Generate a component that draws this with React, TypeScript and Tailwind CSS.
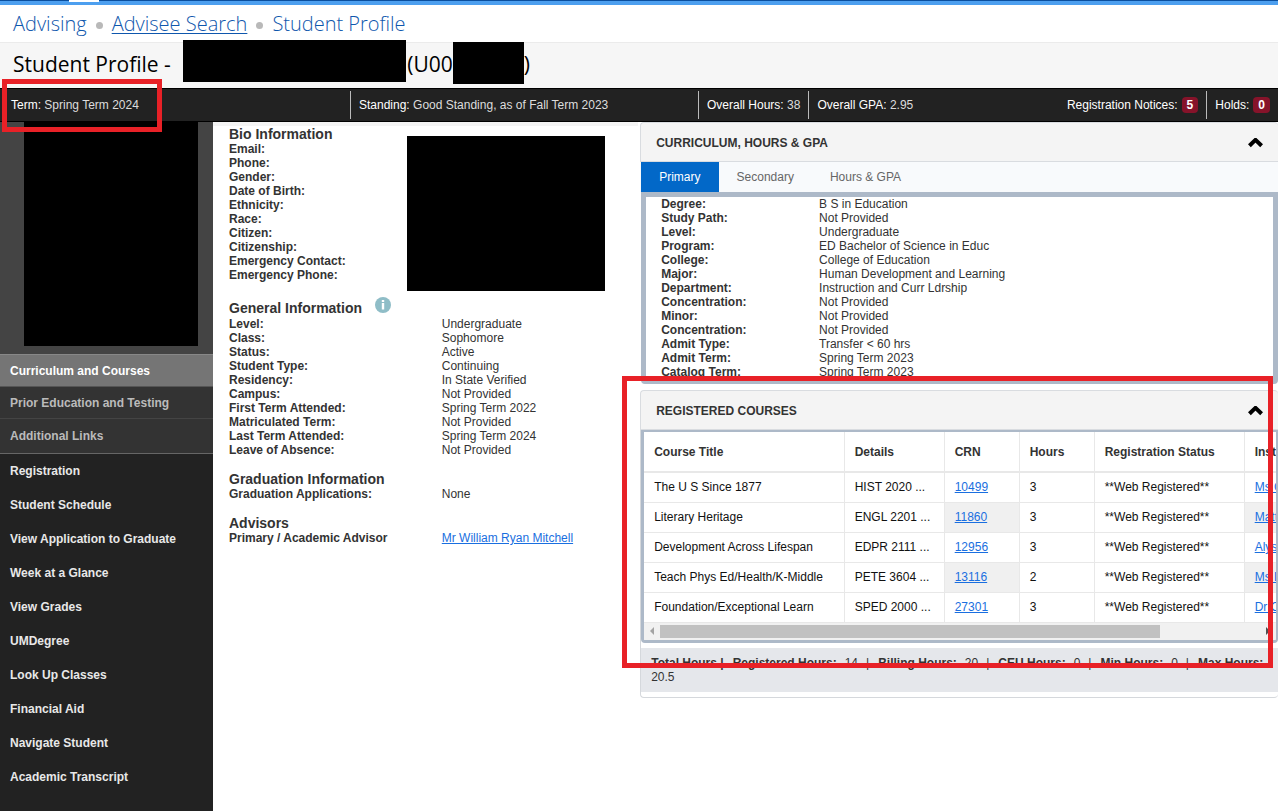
import type { ReactNode } from 'react'

type Field = [label: string, value: string]

const bioFields = [
  'Email:',
  'Phone:',
  'Gender:',
  'Date of Birth:',
  'Ethnicity:',
  'Race:',
  'Citizen:',
  'Citizenship:',
  'Emergency Contact:',
  'Emergency Phone:',
]

const generalFields: Field[] = [
  ['Level:', 'Undergraduate'],
  ['Class:', 'Sophomore'],
  ['Status:', 'Active'],
  ['Student Type:', 'Continuing'],
  ['Residency:', 'In State Verified'],
  ['Campus:', 'Not Provided'],
  ['First Term Attended:', 'Spring Term 2022'],
  ['Matriculated Term:', 'Not Provided'],
  ['Last Term Attended:', 'Spring Term 2024'],
  ['Leave of Absence:', 'Not Provided'],
]

const curriculumFields: Field[] = [
  ['Degree:', 'B S in Education'],
  ['Study Path:', 'Not Provided'],
  ['Level:', 'Undergraduate'],
  ['Program:', 'ED Bachelor of Science in Educ'],
  ['College:', 'College of Education'],
  ['Major:', 'Human Development and Learning'],
  ['Department:', 'Instruction and Curr Ldrship'],
  ['Concentration:', 'Not Provided'],
  ['Minor:', 'Not Provided'],
  ['Concentration:', 'Not Provided'],
  ['Admit Type:', 'Transfer < 60 hrs'],
  ['Admit Term:', 'Spring Term 2023'],
  ['Catalog Term:', 'Spring Term 2023'],
]

const courses = [
  { title: 'The U S Since 1877', details: 'HIST 2020 ...', crn: '10499', hours: 3, instructor: 'Ms C' },
  { title: 'Literary Heritage', details: 'ENGL 2201 ...', crn: '11860', hours: 3, instructor: 'Matt' },
  { title: 'Development Across Lifespan', details: 'EDPR 2111 ...', crn: '12956', hours: 3, instructor: 'Alys' },
  { title: 'Teach Phys Ed/Health/K-Middle', details: 'PETE 3604 ...', crn: '13116', hours: 2, instructor: 'Ms L' },
  { title: 'Foundation/Exceptional Learn', details: 'SPED 2000 ...', crn: '27301', hours: 3, instructor: 'Dr C' },
]

const totals: Field[] = [
  ['Registered Hours:', '14'],
  ['Billing Hours:', '20'],
  ['CEU Hours:', '0'],
  ['Min Hours:', '0'],
]

const links = [
  'Registration',
  'Student Schedule',
  'View Application to Graduate',
  'Week at a Glance',
  'View Grades',
  'UMDegree',
  'Look Up Classes',
  'Financial Aid',
  'Navigate Student',
  'Academic Transcript',
]

function Fields({ items, columns }: { items: Field[]; columns: string }) {
  return (
    <dl>
      {items.map(([label, value], i) => (
        <div key={i} className={`grid ${columns}`}>
          <dt className="font-bold">{label}</dt>
          <dd>{value}</dd>
        </div>
      ))}
    </dl>
  )
}

function PanelHeader({ children }: { children: ReactNode }) {
  return (
    <div className="flex h-10 items-center justify-between rounded-t border border-r-0 border-[#d9dce0] bg-[#f4f4f4] px-[15px] pt-px">
      <h2 className="font-bold">{children}</h2>
      <button aria-label={`Collapse ${children}`}>
        <svg width="15" height="10" viewBox="0 0 15 10" aria-hidden="true">
          <path d="M1.4 7.8 7.5 1.9l6.1 5.9" fill="none" stroke="#000" strokeWidth="4" />
        </svg>
      </button>
    </div>
  )
}

function SubHeading({ children }: { children: ReactNode }) {
  return <h2 className="text-[14px] leading-4 font-bold">{children}</h2>
}

function Stat({ label, value }: { label: string; value: string }) {
  return (
    <span>
      <span className="text-white">{label}</span> {value}
    </span>
  )
}

function Count({ label, value }: { label: string; value: number }) {
  return (
    <span className="flex items-center gap-1 text-white">
      {label}
      <span className="rounded-sm bg-[#86132a] px-[5px] font-bold leading-4">{value}</span>
    </span>
  )
}

export default function App() {
  return (
    <div className="flex min-h-screen flex-col overflow-hidden bg-white font-['Liberation_Sans',Arial,sans-serif] text-[12px] leading-[14px] text-[#333]">
      <div className="h-[5px] border-t border-[#0b4f9e] bg-[#4d9fef]">
        <div className="-mt-px ml-[69px] h-0.5 w-[30px] bg-white" />
      </div>

      <nav className="flex h-[37px] items-center gap-[9px] px-[13px] font-['Open_Sans',sans-serif] text-[20px] font-light text-[#0f57ad]" aria-label="Breadcrumb">
        <a href="#advising">Advising</a>
        <span className="mt-1 size-[7px] rounded-full bg-[#b9b9b9]" />
        <a href="#search" className="underline decoration-1 underline-offset-2">Advisee Search</a>
        <span className="mt-1 size-[7px] rounded-full bg-[#b9b9b9]" />
        <a href="#profile">Student Profile</a>
      </nav>

      <header className="flex h-[46px] items-start border-t border-[#ebebeb] bg-[#f6f6f6] px-[13px] font-['Open_Sans',sans-serif] text-[21px] leading-[42px] text-black">
        <h1 className="flex whitespace-pre">
          Student Profile -{' '}
          <span className="-mt-[3px] ml-[7px] h-[42px] w-[223px] bg-black" />
          <span className="ml-px">(U00</span>
          <span className="-mt-px h-[42px] w-[71px] bg-black" />)
        </h1>
      </header>

      <div className="flex h-[34px] items-stretch border-y border-black bg-[#222] py-0.5 text-[#ddd]">
        <div className="flex w-[351px] items-center border-r border-[#bbb] pl-[11px]">
          <Stat label="Term:" value="Spring Term 2024" />
        </div>
        <div className="flex w-[348px] items-center border-r border-[#bbb] pl-2">
          <Stat label="Standing:" value="Good Standing, as of Fall Term 2023" />
        </div>
        <div className="flex items-center border-r border-[#bbb] px-2">
          <Stat label="Overall Hours:" value="38" />
        </div>
        <div className="flex items-center px-2">
          <Stat label="Overall GPA:" value="2.95" />
        </div>
        <div className="ml-auto flex items-center border-r border-[#bbb] px-2">
          <Count label="Registration Notices:" value={5} />
        </div>
        <div className="flex items-center px-2">
          <Count label="Holds:" value={0} />
        </div>
      </div>

      <div className="flex grow">
        <aside className="w-[213px] shrink-0 bg-[#222] font-bold text-[#e8e8e8]">
          <div className="bg-[#444] pr-[15px] pb-2 pl-6">
            <div className="h-56 bg-black" />
          </div>
          <nav aria-label="Student">
            <div className="border-b border-[#666] bg-[#333] text-[#bbb]">
              <a href="#curriculum" className="flex h-[33px] items-center border-t border-b border-t-[#888] border-b-[#555] bg-[#757575] px-2.5 text-white">Curriculum and Courses</a>
              <a href="#prior" className="flex h-8 items-center border-b border-[#444] px-2.5">Prior Education and Testing</a>
              <a href="#additional" className="flex h-[34px] items-center px-2.5">Additional Links</a>
            </div>
            {links.map((link) => (
              <a key={link} href="#link" className="flex h-[34px] items-center px-2.5">{link}</a>
            ))}
          </nav>
        </aside>

        <main className="grid min-w-0 grow grid-cols-[2fr_3fr] gap-0.5">
          <div className="border-t-4 border-[#f4f4f4] pl-4">
            <section className="flex justify-between pr-[33px]">
              <div>
                <SubHeading>Bio Information</SubHeading>
                <dl>
                  {bioFields.map((label) => (
                    <dt key={label} className="font-bold">{label}</dt>
                  ))}
                </dl>
              </div>
              <div className="mt-[10px] h-[155px] w-[198px] bg-black" />
            </section>

            <section className="mt-1">
              <div className="flex h-[22px] items-start gap-[13px]">
                <div className="pt-[5px]">
                  <SubHeading>General Information</SubHeading>
                </div>
                <svg className="mt-0.5" width="16" height="16" viewBox="0 0 16 16" role="img" aria-label="About general information">
                  <circle cx="8" cy="8" r="8" fill="#8fbdc7" />
                  <path d="M6.8 3h2.4v2H6.8zM6.8 6h2.4v6.6H6.8z" fill="#fff" />
                </svg>
              </div>
              <Fields items={generalFields} columns="grid-cols-[13fr_12fr]" />
            </section>

            <section className="mt-[14px]">
              <SubHeading>Graduation Information</SubHeading>
              <Fields items={[['Graduation Applications:', 'None']]} columns="grid-cols-[13fr_12fr]" />
            </section>

            <section className="mt-[14px]">
              <SubHeading>Advisors</SubHeading>
              <div className="grid grid-cols-[13fr_12fr]">
                <span className="font-bold">Primary / Academic Advisor</span>
                <a href="#advisor" className="text-[#1a6fe0] underline">Mr William Ryan Mitchell</a>
              </div>
            </section>
          </div>

          <div className="flex min-w-0 flex-col gap-1.5">
            <section>
              <PanelHeader>CURRICULUM, HOURS &amp; GPA</PanelHeader>
              <div className="flex h-[30px] bg-[#f8fafc] pl-px text-[#666]" role="tablist">
                <button role="tab" aria-selected="true" className="bg-[#0268c8] px-[18px] text-white">Primary</button>
                <button role="tab" aria-selected="false" className="px-[18px]">Secondary</button>
                <button role="tab" aria-selected="false" className="px-[18px]">Hours &amp; GPA</button>
              </div>
              <div className="ml-px overflow-hidden rounded-b border-5 border-[#adb9c8] pl-[15px]">
                <Fields items={curriculumFields} columns="grid-cols-[8fr_23fr]" />
              </div>
            </section>

            <section className="relative">
              {/* highlight around the registered courses */}
              <div className="pointer-events-none absolute -top-[14px] right-[5px] -left-[18px] h-[292px] border-5 border-[#e82127]" />
              <PanelHeader>REGISTERED COURSES</PanelHeader>
              <div className="rounded-b border-b border-l border-[#d5d8dc] pb-[5px]">
                <div className="overflow-hidden rounded-b border-3 border-r-2 border-t-2 border-[#adb9c8]">
                  <table className="w-[700px] table-fixed border-collapse text-left">
                    <colgroup>
                      <col className="w-[200px]" />
                      <col className="w-[100px]" />
                      <col className="w-[75px]" />
                      <col className="w-[75px]" />
                      <col className="w-[150px]" />
                      <col />
                    </colgroup>
                    <thead>
                      <tr className="h-10 border-b-2 border-[#e8e8e8]">
                        {['Course Title', 'Details', 'CRN', 'Hours', 'Registration Status', 'Instructor'].map((name) => (
                          <th key={name} className="border-r border-[#e8e8e8] px-2.5 font-bold">{name}</th>
                        ))}
                      </tr>
                    </thead>
                    <tbody className="text-[#111]">
                      {courses.map((course) => (
                        <tr key={course.crn} className="group h-[30px] border-b border-[#e8e8e8]">
                          <td className="border-r border-[#e8e8e8] px-2.5">{course.title}</td>
                          <td className="border-r border-[#e8e8e8] px-2.5 whitespace-nowrap">{course.details}</td>
                          <td className="border-r border-[#e8e8e8] px-2.5 group-even:bg-[#f0f0f0]">
                            <a href="#crn" className="text-[#1a6fe0] underline">{course.crn}</a>
                          </td>
                          <td className="border-r border-[#e8e8e8] px-2.5">{course.hours}</td>
                          <td className="border-r border-[#e8e8e8] px-2.5">**Web Registered**</td>
                          <td className="px-2.5 group-even:bg-[#f0f0f0]">
                            <a href="#instructor" className="text-[#1a6fe0] underline">{course.instructor}</a>
                          </td>
                        </tr>
                      ))}
                    </tbody>
                  </table>
                  <div className="flex h-[17px] items-center gap-[6px] bg-[#f1f1f1] px-[6px]" aria-hidden="true">
                    <svg width="4" height="8" viewBox="0 0 4 8"><path d="M4 0v8L0 4z" fill="#a3a3a3" /></svg>
                    <div className="grow">
                      <div className="h-[13px] w-5/6 bg-[#c1c1c1]" />
                    </div>
                    <svg width="4" height="8" viewBox="0 0 4 8"><path d="M0 0v8l4-4z" fill="#505050" /></svg>
                  </div>
                </div>
                <div className="mt-[5px] flex flex-wrap gap-x-[9px] bg-[#e5e7eb] px-2.5 py-2">
                  <b>Total Hours |</b>
                  {totals.map(([label, value]) => (
                    <span key={label} className="flex gap-2">
                      <b>{label}</b>
                      <span>{value}</span>
                      <span>|</span>
                    </span>
                  ))}
                  <b>Max Hours:</b>
                  <span>20.5</span>
                </div>
              </div>
            </section>
          </div>
        </main>
      </div>

      {/* highlight around the term */}
      <div className="pointer-events-none absolute top-[79px] left-[2px] h-[53px] w-40 border-5 border-[#e82127]" />
    </div>
  )
}
